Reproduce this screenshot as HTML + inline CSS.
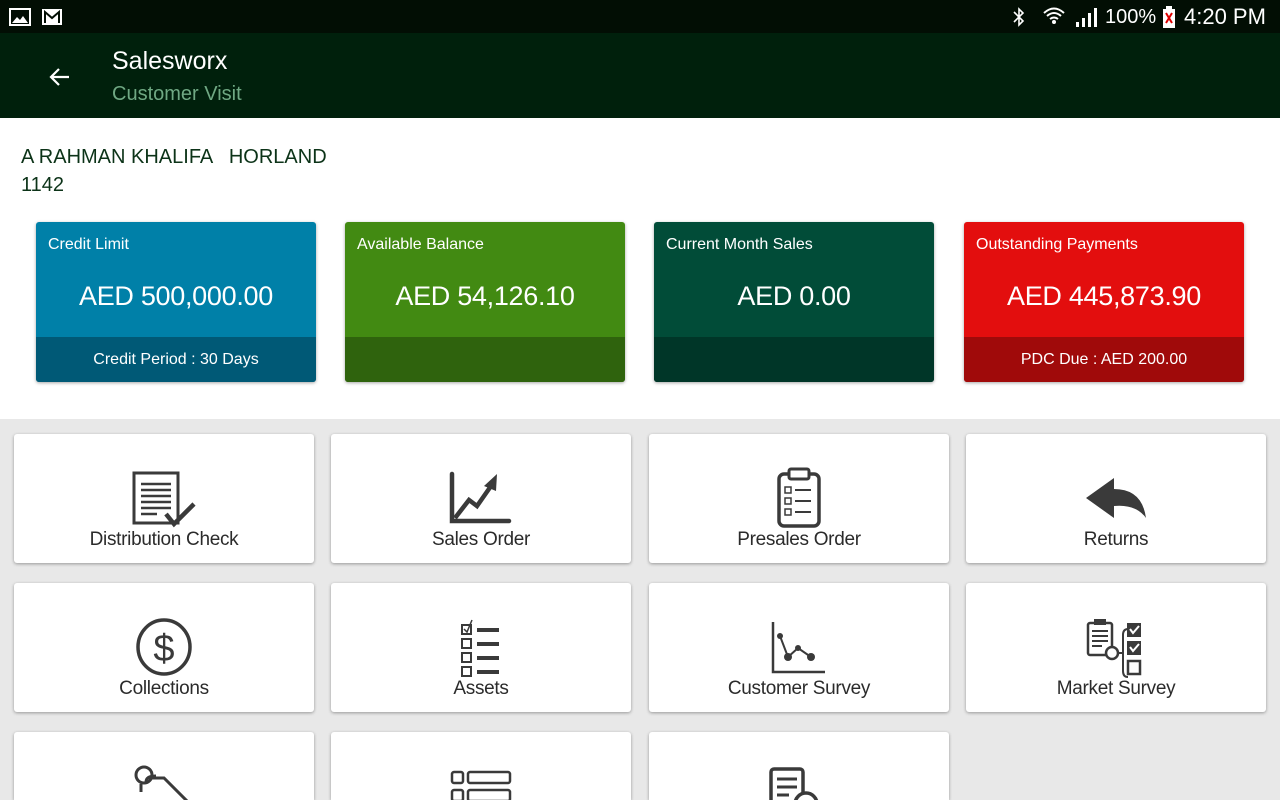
<!DOCTYPE html>
<html><head><meta charset="utf-8"><style>
*{margin:0;padding:0;box-sizing:border-box}
html,body{width:1280px;height:800px;overflow:hidden}
body{font-family:"Liberation Sans",sans-serif;background:#fff;position:relative}
.sb{position:absolute;left:0;top:0;width:1280px;height:33px;background:#020e04;color:#fff}
.ab{position:absolute;left:0;top:33px;width:1280px;height:85px;background:#00200c}
.abs{position:absolute}
.card{position:absolute;top:222px;width:280px;height:160px;border-radius:3px;overflow:hidden;color:#fff;box-shadow:0 1px 3px rgba(0,0,0,.35)}
.card .t{position:absolute;left:12px;top:14px;font-size:16px}
.card .v{position:absolute;left:0;right:0;top:59px;text-align:center;font-size:27px;letter-spacing:-0.3px}
.card .f{position:absolute;left:0;right:0;bottom:0;height:45px;text-align:center;line-height:45px;font-size:16px}
.grey{position:absolute;left:0;top:419px;width:1280px;height:381px;background:#e8e8e8;overflow:hidden}
.tile{position:absolute;width:300px;height:129px;background:#fff;border-radius:3px;box-shadow:0 1px 3px rgba(0,0,0,.35);overflow:hidden}
.tile.s{height:68px;border-radius:3px 3px 0 0}
.tile .l{position:absolute;left:0;right:0;top:95px;text-align:center;font-size:19px;color:#2b2b2b;letter-spacing:-0.3px}
.tile svg{position:absolute;left:0;top:0}
</style></head><body>
<div class="sb">
<svg class="abs" style="left:9px;top:8px" width="22" height="18"><rect x="1" y="1" width="20" height="16" fill="none" stroke="#fff" stroke-width="2"/><path d="M3 15 L8 9 L11 12 L14 8 L19 15Z" fill="#fff"/></svg>
<svg class="abs" style="left:41px;top:8px" width="22" height="18"><rect x="1" y="1" width="20" height="16" fill="#fff"/><path d="M4 15V4L11 10L18 4V15" fill="none" stroke="#020e04" stroke-width="2"/></svg>
<svg class="abs" style="left:1012px;top:7px" width="14" height="20"><path d="M2 5L11 14L7 18V2L11 6L2 15" stroke="#fff" stroke-width="1.6" fill="none"/></svg>
<svg class="abs" style="left:1042px;top:5px" width="24" height="22"><path d="M2 8Q12 -1 22 8M5 11Q12 5 19 11M8 14Q12 11 16 14" stroke="#fff" stroke-width="2" fill="none"/><circle cx="12" cy="17" r="2" fill="#fff"/></svg>
<svg class="abs" style="left:1074px;top:6px" width="24" height="22"><rect x="2" y="16" width="3" height="5" fill="#fff"/><rect x="8" y="12" width="3" height="9" fill="#fff"/><rect x="14" y="7" width="3" height="14" fill="#fff"/><rect x="20" y="2" width="3" height="19" fill="#fff"/></svg>
<div class="abs" style="left:1105px;top:6px;font-size:20px">100%</div>
<svg class="abs" style="left:1162px;top:6px" width="14" height="22"><rect x="4" y="0" width="6" height="3" fill="#fff"/><rect x="1" y="3" width="12" height="19" fill="#fff"/><path d="M4 7L10 17M10 7L4 17" stroke="#d00" stroke-width="2"/></svg>
<div class="abs" style="left:1184px;top:4px;font-size:22px">4:20 PM</div>
</div>
<div class="ab">
<svg class="abs" style="left:48px;top:32px" width="24" height="24"><path d="M21 12H4M11 4L3 12L11 20" stroke="#fff" stroke-width="2.2" fill="none"/></svg>
<div class="abs" style="left:112px;top:14px;font-size:25px;color:#fff">Salesworx</div>
<div class="abs" style="left:112px;top:50px;font-size:20px;color:#6fa883">Customer Visit</div>
</div>
<div class="abs" style="left:21px;top:143px;font-size:20px;color:#0c3318;line-height:28px">A RAHMAN KHALIFA &nbsp; HORLAND<br>1142</div>

<div class="card" style="left:36px;background:#0080a8"><div class="t">Credit Limit</div><div class="v">AED 500,000.00</div><div class="f" style="background:#005976">Credit Period : 30 Days</div></div>
<div class="card" style="left:345px;background:#428a12"><div class="t">Available Balance</div><div class="v">AED 54,126.10</div><div class="f" style="background:#2f630d"></div></div>
<div class="card" style="left:654px;background:#014c38"><div class="t">Current Month Sales</div><div class="v">AED 0.00</div><div class="f" style="background:#003628"></div></div>
<div class="card" style="left:964px;background:#e30e0e"><div class="t">Outstanding Payments</div><div class="v">AED 445,873.90</div><div class="f" style="background:#a00a0a">PDC Due : AED 200.00</div></div>

<div class="grey">
<div class="tile" style="left:14px;top:15px"><svg width="300" height="129"><rect x="120" y="39" width="44" height="50" fill="none" stroke="#3a3a3a" stroke-width="3"/><path d="M127 50H157M127 56H157M127 62H157M127 68H157M127 74H157M127 80H143" stroke="#3a3a3a" stroke-width="2.5"/><path d="M152 80L160 90L180 70" stroke="#3a3a3a" stroke-width="4.5" fill="none"/></svg><div class="l">Distribution Check</div></div>
<div class="tile" style="left:331px;top:15px"><svg width="300" height="129"><path d="M121 40V87H178" stroke="#3a3a3a" stroke-width="4.5" fill="none" stroke-linecap="round"/><path d="M124 84L138 66L146 72L160 52" stroke="#3a3a3a" stroke-width="4.5" fill="none"/><path d="M153 52L166 40L165 57Z" fill="#3a3a3a"/></svg><div class="l">Sales Order</div></div>
<div class="tile" style="left:649px;top:15px"><svg width="300" height="129"><rect x="130" y="40" width="40" height="52" rx="5" fill="none" stroke="#3a3a3a" stroke-width="3.5"/><rect x="140" y="35" width="20" height="10" rx="2" fill="#fff" stroke="#3a3a3a" stroke-width="3"/><path d="M136 53h6v6h-6zM136 64h6v6h-6zM136 75h6v6h-6z" stroke="#3a3a3a" stroke-width="1.5" fill="none"/><path d="M146 56H162M146 67H162M146 78H162" stroke="#3a3a3a" stroke-width="2"/></svg><div class="l">Presales Order</div></div>
<div class="tile" style="left:966px;top:15px"><svg width="300" height="129"><path d="M120 64L148 44V55Q176 55 180 84Q170 70 148 72V84Z" fill="#3a3a3a"/></svg><div class="l">Returns</div></div>

<div class="tile" style="left:14px;top:164px"><svg width="300" height="129"><ellipse cx="150" cy="64" rx="26" ry="27" fill="none" stroke="#3a3a3a" stroke-width="3.5"/><text x="150" y="78" text-anchor="middle" font-size="38" fill="#3a3a3a" font-family="Liberation Sans">$</text></svg><div class="l">Collections</div></div>
<div class="tile" style="left:331px;top:164px"><svg width="300" height="129"><path d="M131 42h9v9h-9zM131 56h9v9h-9zM131 70h9v9h-9zM131 84h9v9h-9z" stroke="#3a3a3a" stroke-width="2" fill="none"/><path d="M133 46L136 49L141 37" stroke="#3a3a3a" stroke-width="1.5" fill="none"/><path d="M146 47H168M146 61H168M146 75H168M146 89H168" stroke="#3a3a3a" stroke-width="4"/></svg><div class="l">Assets</div></div>
<div class="tile" style="left:649px;top:164px"><svg width="300" height="129"><path d="M124 39V89H176" stroke="#3a3a3a" stroke-width="2.5" fill="none"/><path d="M131 53L139 74L149 65L162 74" stroke="#3a3a3a" stroke-width="2" fill="none"/><circle cx="131" cy="53" r="3" fill="#3a3a3a"/><circle cx="139" cy="74" r="4" fill="#3a3a3a"/><circle cx="149" cy="65" r="3" fill="#3a3a3a"/><circle cx="162" cy="74" r="4" fill="#3a3a3a"/></svg><div class="l">Customer Survey</div></div>
<div class="tile" style="left:966px;top:164px"><svg width="300" height="129"><rect x="122" y="40" width="24" height="32" rx="2" fill="none" stroke="#3a3a3a" stroke-width="2.5"/><rect x="128" y="36" width="12" height="6" fill="#3a3a3a"/><path d="M126 48H142M126 53H142M126 58H142M126 63H136" stroke="#3a3a3a" stroke-width="2"/><circle cx="146" cy="70" r="6" fill="#fff" stroke="#3a3a3a" stroke-width="2.5"/><path d="M152 70H158M162 46Q157 46 157 52V88Q157 94 162 94" stroke="#3a3a3a" stroke-width="2" fill="none"/><rect x="161" y="40" width="14" height="14" fill="#3a3a3a"/><rect x="161" y="58" width="14" height="14" fill="#3a3a3a"/><rect x="162" y="78" width="12" height="13" fill="none" stroke="#3a3a3a" stroke-width="2.5"/><path d="M164 46L167 50L173 43M164 64L167 68L173 61" stroke="#fff" stroke-width="2" fill="none"/></svg><div class="l">Market Survey</div></div>

<div class="tile s" style="left:14px;top:313px"><svg width="300" height="68"><circle cx="130" cy="43" r="8" fill="none" stroke="#3a3a3a" stroke-width="3"/><path d="M127 52V60M133 46H150L178 74" stroke="#3a3a3a" stroke-width="3" fill="none"/><path d="M132 50Q132 44 142 44" stroke="#3a3a3a" stroke-width="3" fill="none"/></svg></div>
<div class="tile s" style="left:331px;top:313px"><svg width="300" height="68"><rect x="121" y="40" width="11" height="11" rx="2" fill="none" stroke="#3a3a3a" stroke-width="2.5"/><rect x="137" y="40" width="42" height="11" rx="2" fill="none" stroke="#3a3a3a" stroke-width="2.5"/><rect x="121" y="58" width="11" height="11" rx="2" fill="none" stroke="#3a3a3a" stroke-width="2.5"/><rect x="137" y="58" width="42" height="11" rx="2" fill="none" stroke="#3a3a3a" stroke-width="2.5"/></svg></div>
<div class="tile s" style="left:649px;top:313px"><svg width="300" height="68"><rect x="122" y="37" width="32" height="50" rx="3" fill="none" stroke="#3a3a3a" stroke-width="3.5"/><path d="M128 47H148M128 55H148M128 63H140" stroke="#3a3a3a" stroke-width="3"/><circle cx="157" cy="72" r="11" fill="#fff" stroke="#3a3a3a" stroke-width="3.5"/></svg></div>
</div>
</body></html>
